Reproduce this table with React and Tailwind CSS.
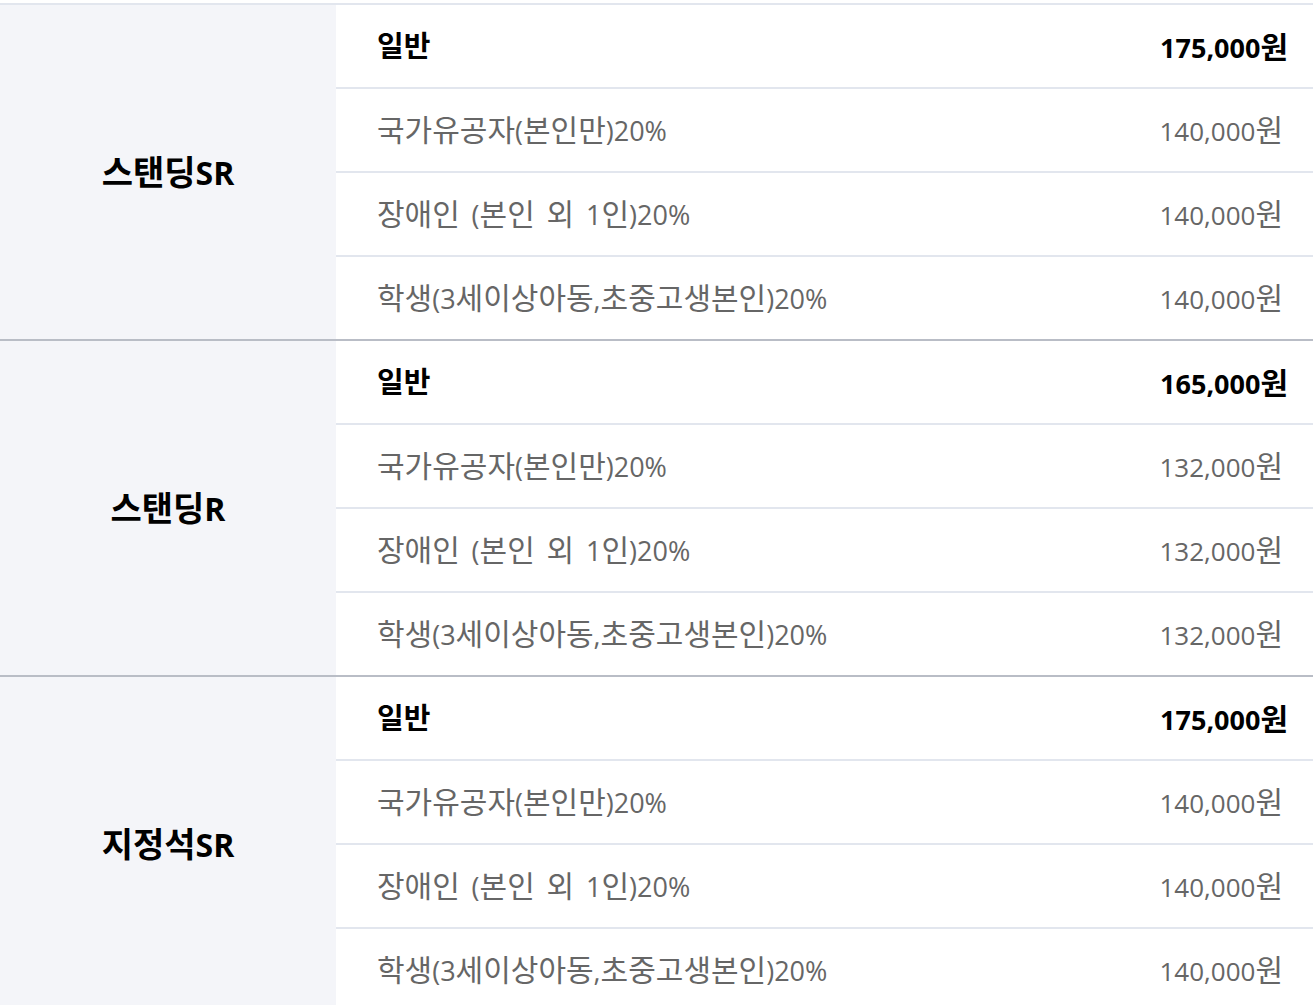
const groups = [
  { name: '스탠딩SR', base: '175,000원', disc: '140,000원' },
  { name: '스탠딩R', base: '165,000원', disc: '132,000원' },
  { name: '지정석SR', base: '175,000원', disc: '140,000원' },
]

const discounts = [
  '국가유공자(본인만)20%',
  '장애인 (본인 외 1인)20%',
  '학생(3세이상아동,초중고생본인)20%',
]

// hangul and latin runs get different sizes so widths line up with the original
function Mixed({ text, ko, en }) {
  const parts = text.match(/[\uAC00-\uD7A3]+| +|[^\uAC00-\uD7A3 ]+/g)
  return (
    <span className="whitespace-pre">
      {parts.map((p, i) => {
        if (p.trim() === '') return <span key={i} className={`${ko} tracking-[4px]`}>{p}</span>
        return <span key={i} className={/[\uAC00-\uD7A3]/.test(p) ? ko : en}>{p}</span>
      })}
    </span>
  )
}

export default function App() {
  return (
    <div className="pt-[3px] bg-white" style={{ fontFamily: '"Open Sans", "Noto Sans CJK KR", sans-serif' }}>
      {groups.map((g, gi) => (
        <div key={gi} className={`flex border-t-2 ${gi === 0 ? 'border-[#e2e6ee]' : 'border-[#b9bdc6]'}`}>
          <div className="w-[336px] shrink-0 bg-[#f4f5f9] flex items-center justify-center">
            <span className="font-bold text-black">
              <Mixed text={g.name} ko="text-[34px]" en="text-[32px]" />
            </span>
          </div>
          <div className="flex-1">
            <div className="h-[84px] flex items-center justify-between pl-[41px] pr-[25px] border-b-2 border-[#e2e6ee]">
              <span className="font-bold text-black">
                <Mixed text="일반" ko="text-[29px]" en="text-[27px]" />
              </span>
              <span className="font-bold text-black">
                <Mixed text={g.base} ko="text-[30px]" en="text-[27px]" />
              </span>
            </div>
            {discounts.map((d, i) => (
              <div key={i} className={`flex items-center justify-between pl-[41px] pr-[30px] pb-[2px] ${i < 2 ? 'h-[84px] border-b-2 border-[#e2e6ee]' : 'h-[82px]'}`}>
                <span className="text-[#666666]">
                  <Mixed text={d} ko="text-[30px]" en="text-[27px]" />
                </span>
                <span className="text-[#666666]">
                  <Mixed text={g.disc} ko="text-[30px]" en="text-[26px]" />
                </span>
              </div>
            ))}
          </div>
        </div>
      ))}
    </div>
  )
}
